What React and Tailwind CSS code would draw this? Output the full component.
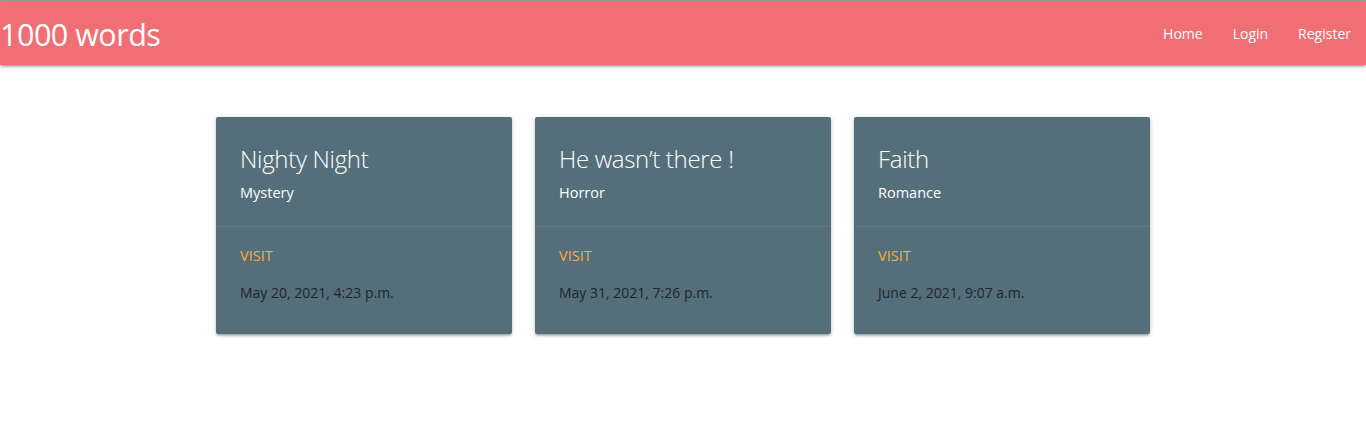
import React from "react";

const cards = [
  { title: "Nighty Night", cat: "Mystery", date: "May 20, 2021, 4:23 p.m." },
  { title: "He wasn\u2019t there !", cat: "Horror", date: "May 31, 2021, 7:26 p.m." },
  { title: "Faith", cat: "Romance", date: "June 2, 2021, 9:07 a.m." },
];

export default function App() {
  return (
    <div className="min-h-[428px] bg-white font-['Open_Sans','Noto_Sans',sans-serif]">
      <div className="h-px bg-[#9e9e9e]" />
      <nav className="h-16 bg-[#ef6f74] flex items-center justify-between text-white shadow-[0_2px_2px_0_rgba(0,0,0,0.14),0_3px_1px_-2px_rgba(0,0,0,0.12),0_1px_5px_0_rgba(0,0,0,0.2)] relative z-10">
        <a className="text-[30.5px] leading-none pl-0 tracking-[-0.5px] mt-[2px]">1000 words</a>
        <ul className="flex h-full items-center mt-[1px]">
          <li className="px-[15px] text-[14px]">Home</li>
          <li className="px-[15px] text-[14px]">Login</li>
          <li className="px-[15px] text-[14px]">Register</li>
        </ul>
      </nav>
      <div className="flex justify-center gap-[23px] pt-[52px]">
        {cards.map((c) => (
          <div
            key={c.title}
            className="w-[296px] h-[217px] bg-[#546e7a] rounded-[2px] shadow-[0_2px_2px_0_rgba(0,0,0,0.14),0_3px_1px_-2px_rgba(0,0,0,0.12),0_1px_5px_0_rgba(0,0,0,0.2)] flex flex-col"
          >
            <div className="px-6 pt-[24px] h-[110px] border-b border-[rgba(160,160,160,0.2)]">
              <div className="text-white text-[24px] font-light leading-[36px] tracking-[-0.3px]">{c.title}</div>
              <div className="text-white text-[14.5px] leading-5 mt-[6px]">{c.cat}</div>
            </div>
            <div className="px-6 pt-[19px]">
              <div className="text-[#ffab40] text-[14.5px] leading-5">VISIT</div>
              <div className="text-[#1f262a] text-[14px] leading-5 mt-[17px]">{c.date}</div>
            </div>
          </div>
        ))}
      </div>
    </div>
  );
}
